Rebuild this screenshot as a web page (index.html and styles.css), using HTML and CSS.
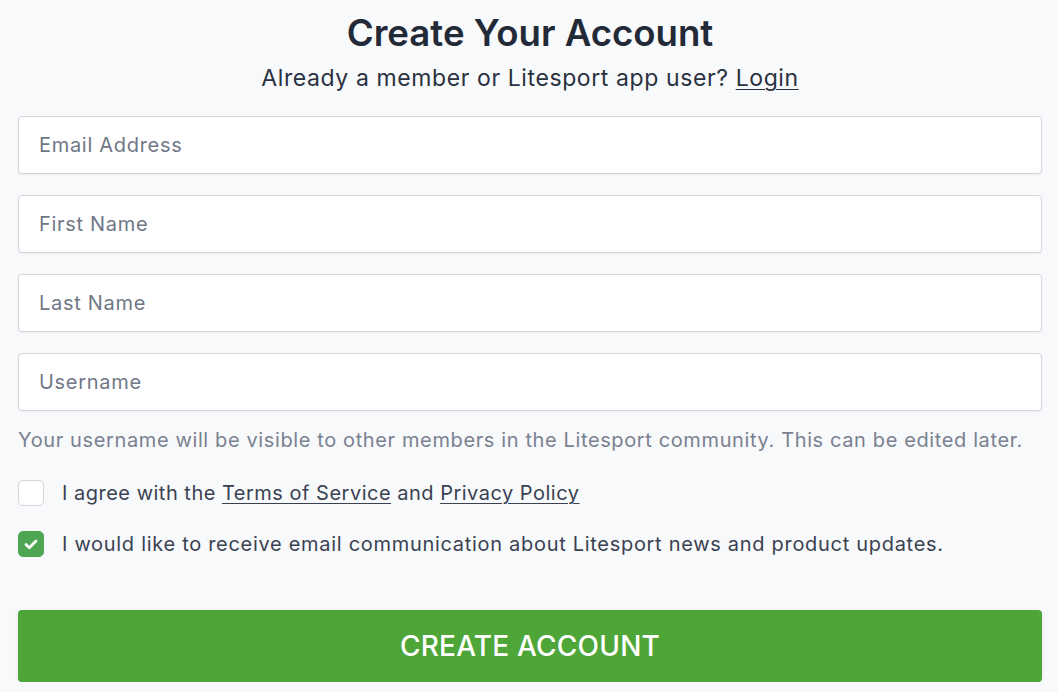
FILE: index.html
```html
<!DOCTYPE html>
<html>
<head>
<meta charset="utf-8">
<link rel="stylesheet" href="styles.css">
</head>
<body>
<div class="page">
  <h1 class="title">Create Your Account</h1>
  <p class="subtitle">Already a member or Litesport app user? <a href="#" class="link">Login</a></p>
  <form class="form">
    <div class="fields">
      <input class="field" type="text" placeholder="Email Address">
      <input class="field" type="text" placeholder="First Name">
      <input class="field" type="text" placeholder="Last Name">
      <input class="field" type="text" placeholder="Username">
    </div>
    <p class="hint">Your username will be visible to other members in the Litesport community. This can be edited later.</p>
    <label class="check-row first">
      <span class="box"></span>
      <span class="check-text">I agree with the <a href="#" class="link">Terms of Service</a> and <a href="#" class="link">Privacy Policy</a></span>
    </label>
    <label class="check-row">
      <span class="box checked"><svg viewBox="0 0 26 26" width="26" height="26"><path d="M8 13.5l3.3 3.2L18 10" fill="none" stroke="#fff" stroke-width="2.8" stroke-linecap="round" stroke-linejoin="round"/></svg></span>
      <span class="check-text">I would like to receive email communication about Litesport news and product updates.</span>
    </label>
    <button type="button" class="submit">CREATE ACCOUNT</button>
  </form>
</div>
</body>
</html>
```

FILE: styles.css
```css
html, body {
  margin: 0;
  padding: 0;
  background: #f8f9fb;
}
body {
  font-family: Inter, "Liberation Sans", sans-serif;
  color: #222a38;
}
.page {
  padding: 11px 16px 0 18px;
}
.title {
  margin: 0;
  text-align: center;
  font-size: 36.6px;
  font-weight: 600;
  line-height: 44px;
  color: #222a38;
}
.subtitle {
  margin: 8px 0 0;
  text-align: center;
  font-size: 23px;
  line-height: 30px;
  letter-spacing: 0.6px;
  color: #2a3140;
}
.link {
  color: inherit;
  text-decoration: underline;
  text-underline-offset: 3px;
  text-decoration-thickness: 1px;
}
.form {
  margin-top: 23px;
}
.fields {
  display: flex;
  flex-direction: column;
  gap: 21px;
}
.field {
  box-sizing: border-box;
  height: 58px;
  width: 100%;
  border: 1px solid #d3d6dc;
  border-radius: 4px;
  background: #fff;
  padding: 0 20px;
  font-family: inherit;
  font-size: 20px;
  letter-spacing: 0.7px;
  color: #222a38;
  box-shadow: 0 1px 2px rgba(0,0,0,0.05);
}
.field::placeholder {
  color: #707786;
}
.hint {
  margin: 15px 0 0;
  font-size: 20px;
  line-height: 28px;
  letter-spacing: 0.62px;
  color: #7a8190;
}
.check-row {
  display: flex;
  align-items: center;
  gap: 18px;
  margin-top: 25px;
  font-size: 20px;
  line-height: 28px;
  letter-spacing: 0.7px;
  color: #3a4252;
}
.check-row.first {
  letter-spacing: 0.5px;
}
.check-row + .check-row {
  margin-top: 23px;
}
.box {
  flex: none;
  box-sizing: border-box;
  width: 26px;
  height: 26px;
  border: 1px solid #d3d6dc;
  border-radius: 5px;
  background: #fff;
  display: flex;
}
.box.checked {
  background: #4ea653;
  border-color: #4ea653;
}
.box svg {
  margin: -1px;
}
.submit {
  display: block;
  width: 100%;
  height: 72px;
  margin-top: 52px;
  border: none;
  border-radius: 4px;
  background: #4ea639;
  color: #fff;
  font-family: inherit;
  font-size: 28px;
  font-weight: 500;
  letter-spacing: 0.2px;
  box-shadow: 0 1px 3px rgba(0,0,0,0.12);
}
```
